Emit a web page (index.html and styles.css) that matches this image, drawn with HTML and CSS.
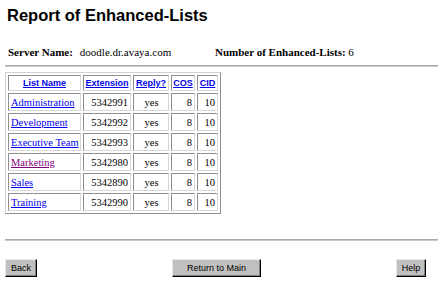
FILE: index.html
```html
<!DOCTYPE html>
<html>
<head>
<meta charset="utf-8">
<link rel="stylesheet" href="styles.css">
</head>
<body>
<div class="page">
  <h1 class="title">Report of Enhanced-Lists</h1>
  <div class="info">
    <div class="info-cell info-server"><b>Server Name:</b><span class="info-val">doodle.dr.avaya.com</span></div>
    <div class="info-cell"><b>Number of Enhanced-Lists:</b> 6</div>
  </div>
  <hr class="rule">
  <table class="lists">
    <thead>
      <tr>
        <th class="c-name"><a href="#">List Name</a></th>
        <th class="c-ext"><a href="#">Extension</a></th>
        <th class="c-reply"><a href="#">Reply?</a></th>
        <th class="c-cos"><a href="#">COS</a></th>
        <th class="c-cid"><a href="#">CID</a></th>
      </tr>
    </thead>
    <tbody>
      <tr><td class="name"><a href="#">Administration</a></td><td class="num">5342991</td><td class="mid">yes</td><td class="num">8</td><td class="num">10</td></tr>
      <tr><td class="name"><a href="#">Development</a></td><td class="num">5342992</td><td class="mid">yes</td><td class="num">8</td><td class="num">10</td></tr>
      <tr><td class="name"><a href="#">Executive Team</a></td><td class="num">5342993</td><td class="mid">yes</td><td class="num">8</td><td class="num">10</td></tr>
      <tr><td class="name"><a href="#" class="visited">Marketing</a></td><td class="num">5342980</td><td class="mid">yes</td><td class="num">8</td><td class="num">10</td></tr>
      <tr><td class="name"><a href="#">Sales</a></td><td class="num">5342890</td><td class="mid">yes</td><td class="num">8</td><td class="num">10</td></tr>
      <tr><td class="name"><a href="#">Training</a></td><td class="num">5342990</td><td class="mid">yes</td><td class="num">8</td><td class="num">10</td></tr>
    </tbody>
  </table>
  <hr class="rule rule-bottom">
  <div class="buttons">
    <button class="btn btn-back">Back</button>
    <button class="btn btn-main">Return to Main</button>
    <button class="btn btn-help">Help</button>
  </div>
</div>
</body>
</html>
```
FILE: styles.css
```css
html, body {
  margin: 0;
  padding: 0;
  background: #fff;
}
.page {
  padding-left: 5px;
  font-family: "Liberation Serif", "Times New Roman", serif;
  color: #000;
}
.title {
  font-family: "Liberation Sans", Arial, sans-serif;
  font-size: 16.5px;
  font-weight: bold;
  line-height: 20px;
  margin: 0;
  padding: 5px 0 0 2px;
}
.info {
  display: flex;
  font-size: 11px;
  line-height: 13px;
  margin-top: 21px;
  padding-left: 3px;
}
.info-server {
  width: 207px;
}
.info-val {
  margin-left: 7px;
}
.rule {
  border: 0;
  border-top: 1px solid #a8a8a8;
  border-bottom: 1px solid #c8c8c8;
  height: 0;
  margin: 6px 0 0 0;
}
.lists {
  margin-top: 5px;
  border-collapse: separate;
  border-spacing: 2px;
  border: 1px solid;
  border-color: #d0d0d0 #909090 #909090 #d0d0d0;
  font-size: 10.5px;
}
.lists th, .lists td {
  border: 1px solid;
  border-color: #909090 #d8d8d8 #d8d8d8 #909090;
  box-sizing: border-box;
  padding: 0 1px 0 2px;
  white-space: nowrap;
}
.lists th {
  height: 16px;
  font-family: "Liberation Sans", Arial, sans-serif;
  font-size: 9px;
  font-weight: bold;
  text-align: center;
  padding: 0;
}
.lists td {
  height: 18px;
}
.lists td.num {
  padding-right: 2px;
}
.c-name { width: 73px; }
.c-ext { width: 48px; }
.c-reply { width: 36px; }
.c-cos { width: 24px; }
.c-cid { width: 21px; }
.lists a {
  color: #0000ee;
  text-decoration: underline;
}
.lists a.visited {
  color: #800080;
}
.name { text-align: left; }
.num { text-align: right; }
.mid { text-align: center; }
.rule-bottom {
  margin-top: 25px;
}
.buttons {
  display: flex;
  justify-content: space-between;
  margin-top: 18px;
  padding-right: 12px;
}
.btn {
  font-family: "Liberation Sans", Arial, sans-serif;
  font-size: 9px;
  height: 18px;
  padding: 0;
  background: #c0c0c0;
  color: #000;
  border: 1px solid;
  border-color: #e8e8e8 #000 #000 #e8e8e8;
  box-shadow: inset -1px -1px 0 #808080;
  border-radius: 0;
}
.btn-back { width: 32px; }
.btn-main { width: 89px; }
.btn-help { width: 30px; }
```
